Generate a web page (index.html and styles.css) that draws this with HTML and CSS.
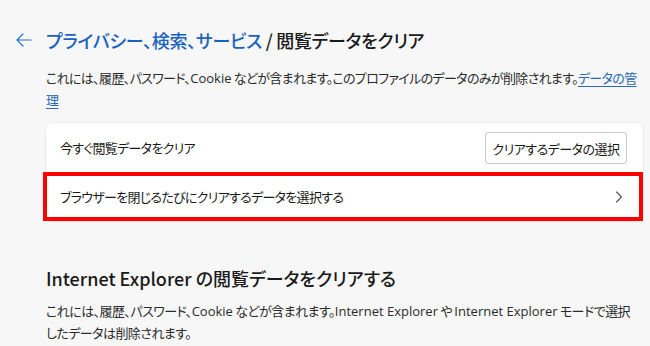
FILE: index.html
```html
<!DOCTYPE html>
<html lang="ja">
<head>
<meta charset="utf-8">
<link rel="stylesheet" href="styles.css">
</head>
<body>
<div class="page">
  <div class="header">
    <span class="back" aria-label="戻る">
      <svg width="16" height="14" viewBox="0 0 16 14"><path d="M7 1 L1 7 L7 13 M1 7 H15" fill="none" stroke="#2a6fc4" stroke-width="1.2" stroke-linecap="round" stroke-linejoin="round"/></svg>
    </span>
    <h1 class="title"><span class="crumb">プライバシー、検索、サービス</span> / 閲覧データをクリア</h1>
  </div>
  <p class="desc">これには、履歴、パスワード、<span class="en">Cookie</span> などが含まれます。このプロファイルのデータのみが削除されます。<a class="link" href="#">データの管<br>理</a></p>
  <div class="card">
    <div class="row">
      <span class="label">今すぐ閲覧データをクリア</span>
      <button class="btn">クリアするデータの選択</button>
    </div>
    <div class="row row-link">
      <span class="label">ブラウザーを閉じるたびにクリアするデータを選択する</span>
      <svg class="chev" width="8" height="12" viewBox="0 0 8 12"><path d="M1.5 1 L6.5 6 L1.5 11" fill="none" stroke="#555" stroke-width="1.1" stroke-linecap="round" stroke-linejoin="round"/></svg>
      <span class="highlight"></span>
    </div>
  </div>
  <h2 class="section">Internet Explorer の閲覧データをクリアする</h2>
  <p class="desc desc2">これには、履歴、パスワード、<span class="en">Cookie</span> などが含まれます。<span class="en">Internet Explorer</span> や <span class="en">Internet Explorer</span> モードで選択<br>したデータは削除されます。</p>
</div>
</body>
</html>
```
FILE: styles.css
```css
html, body {
  margin: 0;
  padding: 0;
  background: #f7f7f7;
}
body {
  font-family: "Noto Sans CJK JP", "Noto Sans", sans-serif;
  font-feature-settings: "palt";
  color: #1a1a1a;
}
.page {
  padding: 0 7px 0 46px;
  width: 597px;
}
.header {
  display: flex;
  align-items: center;
  height: 30px;
  margin-top: 25px;
  position: relative;
}
.back {
  position: absolute;
  left: -30px;
  top: 8px;
  display: flex;
}
.title {
  margin: 0;
  font-size: 18px;
  font-weight: 500;
  letter-spacing: -0.3px;
  line-height: 30px;
  color: #1a1a1a;
  white-space: nowrap;
}
.crumb {
  color: #1a62c0;
}
.desc {
  margin: 12px 0 0;
  font-size: 13px;
  letter-spacing: -0.65px;
  line-height: 22px;
  color: #2b2b2b;
}
.en {
  font-family: "Open Sans", "Noto Sans", sans-serif;
  letter-spacing: 0;
}
.link {
  color: #2a68b8;
  text-decoration: underline;
  text-underline-offset: 3px;
}
.card {
  margin-top: 12px;
  background: #fff;
  border-radius: 6px;
  box-shadow: 0 0 2px rgba(0,0,0,0.12), 0 1px 2px rgba(0,0,0,0.06);
}
.row {
  display: flex;
  align-items: center;
  justify-content: space-between;
  height: 49px;
  padding: 0 16px 0 14px;
  font-size: 13px;
  letter-spacing: -0.7px;
  position: relative;
}
.label {
  color: #1a1a1a;
}
.btn {
  font-family: inherit;
  font-feature-settings: "palt";
  font-size: 13px;
  letter-spacing: -0.5px;
  white-space: nowrap;
  color: #1a1a1a;
  background: #fff;
  border: 1px solid #c8c8c8;
  border-radius: 3px;
  height: 32px;
  width: 142px;
  padding: 0;
  margin-top: 1px;
}
.row-link {
  padding-right: 20px;
}
.chev {
  display: block;
}
.highlight {
  position: absolute;
  left: -3px;
  right: 0;
  top: 0;
  bottom: 0;
  border: 4px solid #f00;
  pointer-events: none;
}
.section {
  margin: 44px 0 0;
  font-size: 18px;
  font-weight: 500;
  line-height: 26px;
  color: #1a1a1a;
}
.desc2 {
  margin-top: 9px;
  letter-spacing: -0.55px;
}
```
